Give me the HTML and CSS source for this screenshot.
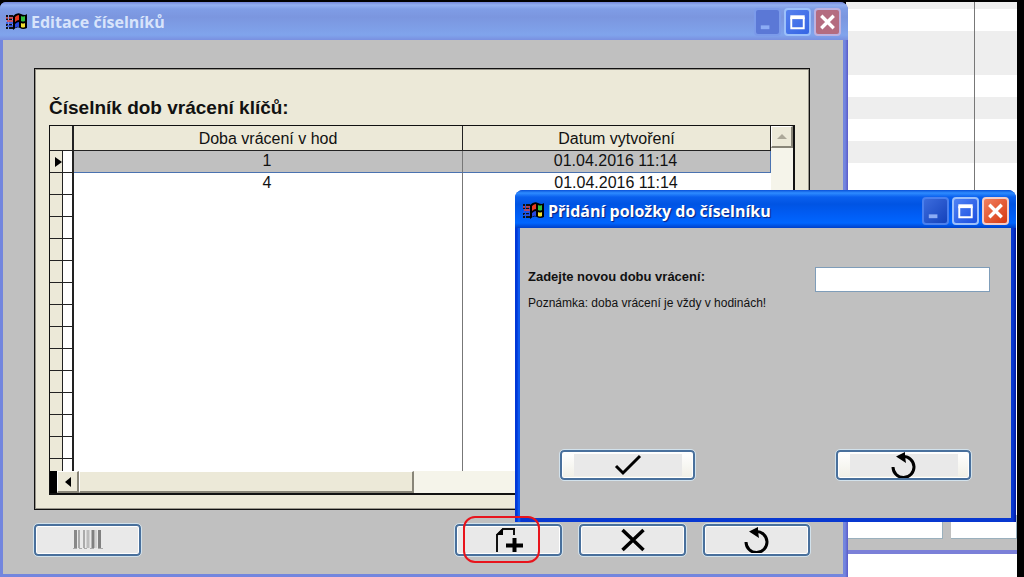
FILE: index.html
```html
<!DOCTYPE html>
<html lang="cs">
<head>
<meta charset="utf-8">
<title>Editace číselníků</title>
<link rel="stylesheet" href="styles.css">
</head>
<body>
<svg class="defs" aria-hidden="true">
  <symbol id="flag" viewBox="0 0 22 20">
    <path d="M8 4Q12 0 16 2T22 2V16Q18 18 15 16T8 18Z" fill="#000"/>
    <path d="M1 4h2M4 4h4M1 7h2M4 7h3M1 13h2M4 13h3M1 16h2M4 16h4" stroke="#111" stroke-width="2"/>
    <path d="M1 6h2M4 6h4M2 9h6" stroke="#e04040" stroke-width="1.5"/>
    <path d="M1 11h2M4 11h4M2 14h6" stroke="#3050e0" stroke-width="1.5"/>
    <path d="M10 5Q12 3 14 3V8Q12 8 10 10Z" fill="#e83a20"/>
    <path d="M16 4Q18 5 20 4V9Q18 10 16 9Z" fill="#30c040"/>
    <path d="M10 12Q12 10 14 10V15Q12 14 10 16Z" fill="#2848e0"/>
    <path d="M16 11Q18 12 20 11V15Q18 16 16 15Z" fill="#f0e030"/>
  </symbol>
  <symbol id="minimize" viewBox="0 0 24 24"><path d="M5 17.500h9" stroke="currentColor" stroke-width="4"/></symbol>
  <symbol id="maximize" viewBox="0 0 24 24"><path d="M5.500 7v11.500h13V7" fill="none" stroke="#fff" stroke-width="2"/><path d="M4.500 7h15" stroke="#fff" stroke-width="4"/></symbol>
  <symbol id="close" viewBox="0 0 24 24"><path d="M5.500 5.500L18.500 18.500M18.500 5.500L5.500 18.500" stroke="#fff" stroke-width="3.500"/></symbol>
  <symbol id="undo" viewBox="0 0 28 26">
    <path d="M3 15A10.500 10.500 0 1 0 13 4.500" fill="none" stroke="#000" stroke-width="3"/>
    <path d="M6 4.500L15 0V4.500L16 11Z" fill="#000"/>
  </symbol>
</svg>
<div class="desktop">
  <div class="backdrop">
    <div class="stripes"></div>
    <div class="cells"><span class="cell"></span><span class="cell"></span></div>
    <div class="below"></div>
  </div>

  <section class="window inactive">
    <header class="titlebar">
      <svg class="flag"><use href="#flag"/></svg>
      <h1 class="title">Editace číselníků</h1>
      <button class="control min" aria-label="Minimalizovat"><svg><use href="#minimize"/></svg></button>
      <button class="control" aria-label="Maximalizovat"><svg><use href="#maximize"/></svg></button>
      <button class="control close" aria-label="Zavřít"><svg><use href="#close"/></svg></button>
    </header>
    <div class="client">
      <div class="panel">
        <h2 class="heading">Číselník dob vrácení klíčů:</h2>
        <div class="grid">
          <div class="grid-main">
            <table class="table">
              <colgroup><col class="col-mark"><col class="col-flag"><col class="col-time"><col></colgroup>
              <thead><tr><th colspan="2" class="corner"></th><th>Doba vrácení v hod</th><th>Datum vytvoření</th></tr></thead>
              <tbody>
                <tr class="selected"><td><svg class="pointer" viewBox="0 0 8 10"><path d="M1 0L8 5L1 10Z"/></svg></td><td></td><td>1</td><td>01.04.2016 11:14</td></tr>
                <tr><td></td><td></td><td>4</td><td>01.04.2016 11:14</td></tr>
                <tr><td></td><td></td><td></td><td></td></tr>
                <tr><td></td><td></td><td></td><td></td></tr>
                <tr><td></td><td></td><td></td><td></td></tr>
                <tr><td></td><td></td><td></td><td></td></tr>
                <tr><td></td><td></td><td></td><td></td></tr>
                <tr><td></td><td></td><td></td><td></td></tr>
                <tr><td></td><td></td><td></td><td></td></tr>
                <tr><td></td><td></td><td></td><td></td></tr>
                <tr><td></td><td></td><td></td><td></td></tr>
                <tr><td></td><td></td><td></td><td></td></tr>
                <tr><td></td><td></td><td></td><td></td></tr>
                <tr><td></td><td></td><td></td><td></td></tr>
                <tr><td></td><td></td><td></td><td></td></tr>
              </tbody>
            </table>
            <div class="vscroll"><button class="scroll-button" aria-label="Nahoru"><svg viewBox="0 0 10 6" class="up"><path d="M0 5L5 0L10 5Z"/></svg></button></div>
          </div>
          <div class="hscroll">
            <span class="split"></span>
            <button class="scroll-button" aria-label="Vlevo"><svg viewBox="0 0 6 10" class="left"><path d="M6 0L0 5L6 10Z"/></svg></button>
            <span class="thumb"></span>
          </div>
        </div>
      </div>
      <div class="actions">
        <button class="action first" aria-label="Čárový kód"><svg class="barcode" viewBox="0 0 30 20"><path d="M2.500 0v18" stroke="#888" stroke-width="3"/><path d="M6 0v18M11 0v18" stroke="#aaa" stroke-width="2"/><path d="M15 0v18" stroke="#bbb" stroke-width="3"/><path d="M20 0v18M26.500 0v18" stroke="#808080" stroke-width="3"/><path d="M23 0v18" stroke="#bbb" stroke-width="1"/><path d="M0 18.500h4M6 18.500h3M11 18.500h3M17 18.500h4M25 18.500h5" stroke="#aaa"/></svg></button>
        <button class="action" aria-label="Přidat položku"><svg class="add" viewBox="0 0 30 26"><path d="M3 25V8L9 2H20V8" fill="none" stroke="#111" stroke-width="2"/><path d="M2 8L9 1V8Z"/><path d="M20.500 11v14M12 18.500h17" stroke="#000" stroke-width="4"/></svg></button>
        <button class="action" aria-label="Smazat"><svg class="cross" viewBox="0 0 24 24"><path d="M1.500 2L22.500 22M22.500 2L1.500 22" stroke="#000" stroke-width="3.500"/></svg></button>
        <button class="action" aria-label="Zpět"><svg class="undo"><use href="#undo"/></svg></button>
      </div>
    </div>
  </section>

  <section class="window dialog">
    <header class="titlebar">
      <svg class="flag"><use href="#flag"/></svg>
      <h1 class="title">Přidání položky do číselníku</h1>
      <button class="control min" aria-label="Minimalizovat"><svg><use href="#minimize"/></svg></button>
      <button class="control" aria-label="Maximalizovat"><svg><use href="#maximize"/></svg></button>
      <button class="control close" aria-label="Zavřít"><svg><use href="#close"/></svg></button>
    </header>
    <form class="client">
      <div class="field">
        <div class="texts">
          <label class="label" for="time">Zadejte novou dobu vrácení:</label>
          <p class="note">Poznámka: doba vrácení je vždy v hodinách!</p>
        </div>
        <input class="input" id="time" type="text">
      </div>
      <div class="answers">
        <button type="button" class="action" aria-label="Potvrdit"><span class="face"><svg class="check" viewBox="0 0 28 22"><path d="M2 12L9 19L26 2" fill="none" stroke="#000" stroke-width="3"/></svg></span></button>
        <button type="button" class="action" aria-label="Zpět"><span class="face"><svg class="undo"><use href="#undo"/></svg></span></button>
      </div>
    </form>
  </section>
  <div class="highlight"></div>
</div>
</body>
</html>
```
FILE: styles.css
```css
* { box-sizing: border-box; }
body { margin: 0; font-family: "Liberation Sans", Arial, sans-serif; color: #111; }
h1, h2, p { margin: 0; }
button { padding: 0; cursor: pointer; }
svg { display: block; }
.defs { position: absolute; width: 0; height: 0; }

.desktop {
  position: relative;
  height: 100vh;
  overflow: hidden;
  background: #000;
}

/* Window behind, visible only at the right edge */
.backdrop {
  position: absolute;
  top: 2px;
  right: 7px;
  bottom: 0;
  width: 171px;
  display: flex;
  flex-direction: column;
  background: #c0c0c0;
}
.stripes {
  flex: 1;
  background:
    linear-gradient(#777, #777) 128px 0 / 1px 100% no-repeat,
    linear-gradient(#eee 7px, #fff 7px 29px, #eee 29px 73px, #fff 73px 95px, #eee 95px 117px, #fff 117px 139px, #eee 139px 161px, #fff 161px);
}
.cells { display: flex; gap: 8px; height: 24px; }
.cell { flex: 1; background: #fff; border: solid #9ab0bd; border-width: 0 1px 1px 0; }
.cell:first-child { flex: 0 0 97px; }
.below { height: 27px; margin-top: 11px; border-top: 4px solid #7b80d8; background: #fff; }

/* Windows */
.window { position: absolute; display: flex; flex-direction: column; }
.inactive {
  top: 2px;
  left: 0;
  right: 176px;
  bottom: 0;
  padding: 0 5px 3px 3px;
  border-radius: 6px 8px 0 0;
  background: linear-gradient(90deg, #7386de calc(100% - 3px), #5a5ac8);
}
.dialog {
  top: 190px;
  left: 515px;
  right: 8px;
  bottom: 55px;
  padding: 0 5px 4px;
  border-radius: 8px 8px 0 0;
  background: linear-gradient(90deg, #0038d8 2px, #1263f5 4px, #0838d0 6px calc(100% - 3px), #0018a0);
}
.titlebar {
  display: flex;
  align-items: center;
  gap: 3px;
  height: 38px;
  margin: 0 -5px;
  padding: 4px 7px 0;
  border-radius: 8px 8px 0 0;
  background: linear-gradient(#0850d8, #2e8cff 3px, #0a60ee 7px, #0054e3 14px, #005cf4 24px, #0066ff 33px, #0040c8);
}
.inactive .titlebar {
  margin: 0 -5px 0 -3px;
  padding: 2px 7px 0 5px;
  border-radius: 6px 8px 0 0;
  background: linear-gradient(#7386d8, #93b0f0 3px, #7f9de6 7px, #7b96df 15px, #80a4ec 33px, #7a90e0);
}
.flag { width: 22px; height: 20px; }
.title {
  flex: 1;
  padding-left: 1px;
  font: bold 16px/24px "Open Sans", "Noto Sans", sans-serif;
  color: #fff;
  text-shadow: 1px 1px 1px #0a2080;
}
.inactive .title { color: #d8e4fb; text-shadow: none; }
.control {
  width: 27px;
  height: 28px;
  border: 2px solid #9cc0fa;
  border-radius: 4px;
  background: linear-gradient(135deg, #4f82f4, #1c4fe0);
  color: #8cacf5;
}
.control svg { width: 23px; height: 24px; }
.dialog .min { background: linear-gradient(135deg, #3c6cdd, #1442bb); border-color: #4a80ee; }
.dialog .close { background: linear-gradient(135deg, #f08060, #d83810); border-color: #f4cdc8; }
.inactive .control { background: linear-gradient(135deg, #5580ee, #3565e4); }
.inactive .min { background: #5b78d6; border-color: #7c9bea; }
.inactive .close { background: #b46c80; border-color: #bdb2e0; }
.client {
  flex: 1;
  display: flex;
  flex-direction: column;
  min-height: 0;
  background: #c0c0c0;
}

/* Code list */
.inactive .client { padding: 28px 33px 18px 31px; gap: 14px; }
.panel {
  flex: 1;
  display: flex;
  flex-direction: column;
  min-height: 0;
  padding: 28px 14px 14px;
  border: 1px solid #111;
  outline: 1px solid #99968c;
  outline-offset: -2px;
  background: #ece9d8;
}
.heading { font-size: 19px; line-height: 22px; margin-bottom: 6px; }
.grid {
  flex: 1;
  display: flex;
  flex-direction: column;
  min-height: 0;
  border: solid #111;
  border-width: 1px 2px 2px 1px;
  background: #fff;
}
.grid-main { flex: 1; display: flex; min-height: 0; overflow: hidden; }
.table {
  flex: 1;
  align-self: flex-start;
  table-layout: fixed;
  border-collapse: separate;
  border-spacing: 0;
  font-size: 16px;
  line-height: 18px;
}
.col-mark { width: 13px; }
.col-flag { width: 11px; }
.col-time { width: 389px; }
.table th {
  height: 25px;
  padding: 2px 0 0;
  border: solid #222;
  border-width: 0 1px 1px 0;
  background: #ece9d8;
  font-weight: normal;
}
.table th.corner { border-right-width: 2px; }
.table td { height: 22px; padding: 0 2px 2px 0; text-align: center; border-right: 1px solid #777; }
.table td:nth-child(-n+2) { padding: 0; border: solid #222; border-width: 0 1px 1px 0; }
.table td:nth-child(2) { border-right-width: 2px; }
.table td:first-child { background: #ece9d8; }
.table td:last-child { border-right: 0; }
.table .selected td:nth-child(n+3) { background: #c0c0c0; border-bottom: 1px solid #4a72b0; }
.table .selected td:last-child { border-right: 1px solid #4a72b0; }
.pointer { width: 8px; height: 10px; margin-left: 4px; }
.vscroll { flex: 0 0 22px; background: #f5f4ea; }
.scroll-button {
  display: flex;
  align-items: center;
  justify-content: center;
  width: 22px;
  height: 22px;
  border: solid;
  border-width: 1px 2px 2px 1px;
  border-color: #fff #888578 #888578 #fff;
  background: #ece9d8;
}
.up { width: 10px; height: 6px; fill: #aca899; }
.left { width: 6px; height: 10px; }
.hscroll { display: flex; height: 22px; background: #f5f4ea; }
.split { width: 7px; background: #000; }
.thumb {
  width: 335px;
  border: solid;
  border-width: 1px 2px 2px 1px;
  border-color: #fff #888578 #888578 #fff;
  background: #ece9d8;
}

/* Buttons */
.actions { display: flex; gap: 17px; }
.action {
  display: flex;
  align-items: center;
  justify-content: center;
  height: 32px;
  border: 2px solid #49709c;
  border-radius: 4px;
  outline: 1px solid #d2e2ec;
  overflow: hidden;
  background: #e9e9e9;
  box-shadow: inset 0 0 0 1px #fff;
}
.actions .action { width: 107px; }
.actions .first { margin-right: auto; }
.barcode { width: 30px; height: 20px; }
.add { width: 30px; height: 26px; }
.cross { width: 24px; height: 24px; }
.undo { width: 28px; height: 26px; }
.check { width: 28px; height: 22px; }

/* Dialog */
.dialog .client { justify-content: space-between; padding: 39px 21px 38px 8px; }
.field { display: flex; justify-content: space-between; align-items: flex-start; }
.label { display: block; font-size: 13px; font-weight: bold; line-height: 20px; }
.note { margin-top: 6px; font-size: 12px; line-height: 20px; }
.input { width: 175px; height: 25px; border: 1px solid #7f9db9; background: #fff; font-size: 14px; }
.answers { display: flex; justify-content: space-between; padding: 0 19px 0 32px; }
.answers .action {
  width: 135px;
  height: 30px;
  background: linear-gradient(#fff, #f0efe6);
}
.face { display: flex; justify-content: center; align-items: center; width: 108px; height: 22px; background: #e9e9e9; }

/* Red marker round the add button */
.highlight {
  position: absolute;
  left: 463px;
  bottom: 14px;
  width: 77px;
  height: 47px;
  border: 2px solid #e8141c;
  border-radius: 12px;
}
```
